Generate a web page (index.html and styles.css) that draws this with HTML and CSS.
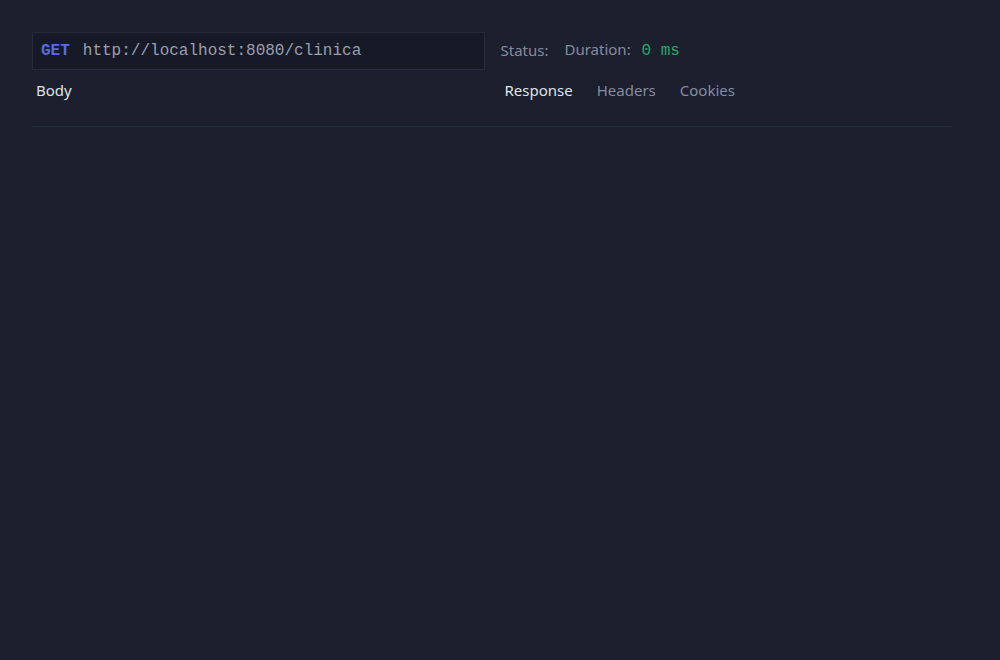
FILE: index.html
```html
<!DOCTYPE html>
<html lang="en">
<head>
<meta charset="utf-8">
<title>Request</title>
<link rel="stylesheet" href="styles.css">
</head>
<body>
<div class="panel">
  <div class="col">
    <div class="url-box">
      <span class="method">GET</span>
      <span class="url">http://localhost:8080/clinica</span>
    </div>
    <div class="tabs">
      <span class="tab active">Body</span>
    </div>
  </div>
  <div class="col">
    <div class="meta">
      <span class="meta-item">Status:</span>
      <span class="meta-item">Duration: <span class="value">0 ms</span></span>
    </div>
    <div class="tabs">
      <span class="tab active">Response</span>
      <span class="tab">Headers</span>
      <span class="tab">Cookies</span>
    </div>
  </div>
</div>
<div class="divider"></div>
</body>
</html>
```
FILE: styles.css
```css
html {
  overflow: scroll;
  background: #1b1f2e;
}
body {
  margin: 0;
  padding: 32px 47px 32px 32px;
  font-family: "Noto Sans", "Open Sans", sans-serif;
  font-size: 15px;
  color: #d3d6de;
}
.panel {
  display: grid;
  grid-template-columns: 1fr 1fr;
  column-gap: 16px;
}
.url-box {
  height: 38px;
  box-sizing: border-box;
  border: 1px solid #262b3b;
  background: #161a27;
  display: flex;
  align-items: center;
  padding: 0 8px;
  font-family: "Liberation Mono", monospace;
  font-size: 16px;
}
.method {
  color: #5a6ae6;
  font-weight: bold;
  margin-right: 13px;
}
.url {
  color: #9a9fae;
}
.meta {
  height: 38px;
  box-sizing: border-box;
  padding-bottom: 3px;
  display: flex;
  align-items: center;
  gap: 16px;
  color: #878c9c;
}
.value {
  margin-left: 7px;
  font-family: "Liberation Mono", monospace;
  font-size: 16px;
  color: #27a866;
}
.tabs {
  display: flex;
  gap: 16px;
  padding: 8px 0 24px;
}
.tab {
  padding: 0 4px;
  line-height: 24px;
  color: #858ca0;
}
.tab.active {
  color: #dfe2e9;
}
.divider {
  height: 1px;
  background: #1f2a37;
}
```
